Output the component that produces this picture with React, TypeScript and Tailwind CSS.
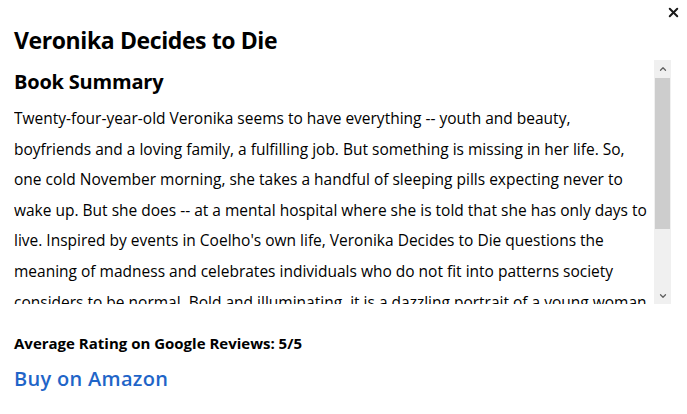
import { ChevronDown, ChevronUp, X } from "lucide-react";

const SUMMARY_LINES = [
  "Twenty-four-year-old Veronika seems to have everything -- youth and beauty,",
  "boyfriends and a loving family, a fulfilling job. But something is missing in her life. So,",
  "one cold November morning, she takes a handful of sleeping pills expecting never to",
  "wake up. But she does -- at a mental hospital where she is told that she has only days to",
  "live. Inspired by events in Coelho's own life, Veronika Decides to Die questions the",
  "meaning of madness and celebrates individuals who do not fit into patterns society",
  "considers to be normal. Bold and illuminating, it is a dazzling portrait of a young woman",
];

export default function App() {
  return (
    <div className="relative w-[687px] h-[414px] bg-white text-black font-['Open_Sans',sans-serif]">
      <button className="absolute right-[4px] top-[3px] p-0.5 text-[#1a1a1a]">
        <X size={15} strokeWidth={3.2} />
      </button>

      <div className="pl-[14px] pr-[16px] pt-[25px]">
        <h1 className="text-[23px] font-bold leading-[30px] tracking-[-0.4px]">
          Veronika Decides to Die
        </h1>

        {/* summary box with scrollbar */}
        <div className="mt-[5px] flex h-[244px]">
          <div className="min-w-0 flex-1 overflow-hidden pt-[8px]">
            <h2 className="text-[20px] font-bold leading-[28px] tracking-[-0.2px]">
              Book Summary
            </h2>
            <p className="mt-[7px] whitespace-nowrap text-[15.5px] leading-[30.6px]">
              {SUMMARY_LINES.map((line, i) => (
                <span className="block" key={i}>
                  {line}
                </span>
              ))}
            </p>
          </div>
          <div className="flex w-[17px] flex-col bg-[#f0f0f0]">
            <div className="flex h-[18px] items-center justify-center text-[#606060]">
              <ChevronUp size={10} strokeWidth={3} />
            </div>
            <div className="flex-1">
              <div className="mx-[1px] h-[151px] bg-[#cdcdcd]" />
            </div>
            <div className="flex h-[17px] items-center justify-center text-[#606060]">
              <ChevronDown size={10} strokeWidth={3} />
            </div>
          </div>
        </div>

        <p className="mt-[29px] text-[15px] font-bold leading-[20px]">
          Average Rating on Google Reviews: 5/5
        </p>
        <a
          className="mt-[12px] block text-[20px] font-semibold leading-[28px] tracking-[0.3px] text-[#1f65c8]"
          href="#"
        >
          Buy on Amazon
        </a>
      </div>
    </div>
  );
}
